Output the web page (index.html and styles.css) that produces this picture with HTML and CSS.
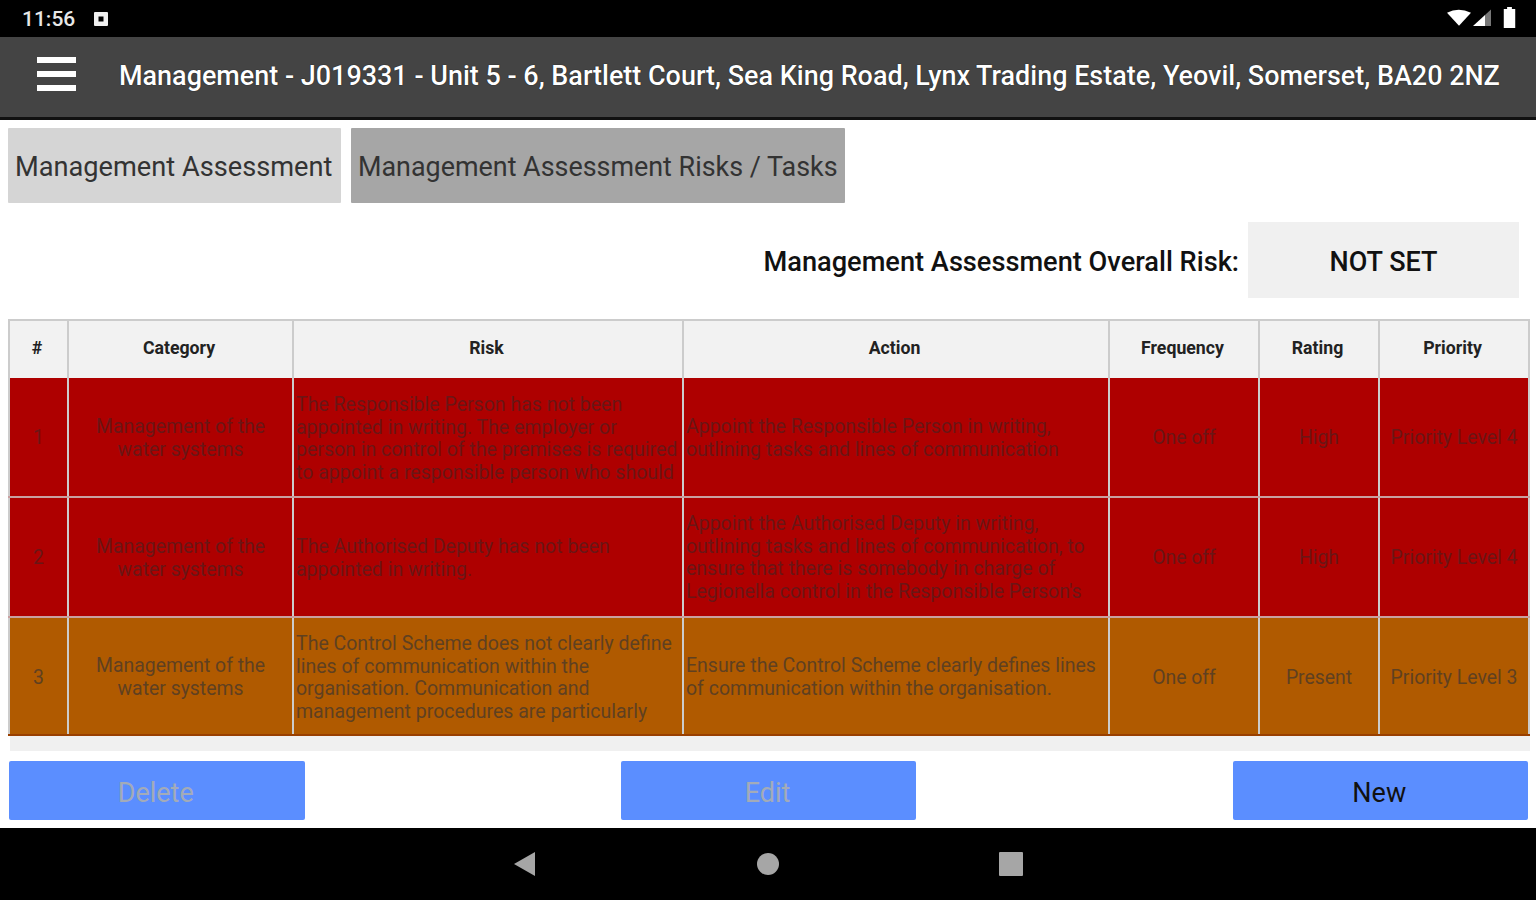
FILE: index.html
```html
<!DOCTYPE html>
<html lang="en">
<head>
<meta charset="utf-8">
<title>Management Assessment Risks</title>
<link rel="stylesheet" href="styles.css">
</head>
<body>
<div class="screen">
  <header class="status">
    <div class="status-left">
      <span class="clock">11:56</span>
      <svg class="notif" viewBox="0 0 16 16" width="16" height="16"><path fill-rule="evenodd" fill="#f0f0f0" d="M2 1h12a1 1 0 0 1 1 1v12a1 1 0 0 1-1 1H2a1 1 0 0 1-1-1V2a1 1 0 0 1 1-1zm3.500 4.500v5h5v-5z"/></svg>
    </div>
    <div class="status-right">
      <svg viewBox="0 0 25 18" width="24" height="18"><path fill="#fff" d="M0 3.500Q12-2.500 25 3.500L12.500 17z"/></svg>
      <svg viewBox="0 0 19 18" width="19" height="18"><path fill="#fff" d="M0 17 12 6v11z"/><path fill="#777" d="M12 6l6-5.500V17h-6z"/></svg>
      <svg viewBox="0 0 12 22" width="13" height="21" class="battery"><path fill="#fff" d="M3.500 0h5v2H12v20H0V2h3.500z"/></svg>
    </div>
  </header>

  <div class="appbar">
    <button class="menu" aria-label="Menu"><span></span><span></span><span></span></button>
    <h1 class="title">Management - J019331 - Unit 5 - 6, Bartlett Court, Sea King Road, Lynx Trading Estate, Yeovil, Somerset, BA20 2NZ</h1>
  </div>

  <main class="content">
    <nav class="tabs">
      <div class="tab">Management Assessment</div>
      <div class="tab tab-active">Management Assessment Risks / Tasks</div>
    </nav>

    <section class="overall">
      <span class="overall-label">Management Assessment Overall Risk:</span>
      <div class="overall-value">NOT SET</div>
    </section>

    <section class="table">
      <div class="row head">
        <div class="cell">#</div><div class="cell">Category</div><div class="cell">Risk</div><div class="cell">Action</div><div class="cell">Frequency</div><div class="cell">Rating</div><div class="cell">Priority</div>
      </div>
      <div class="row red">
        <div class="cell">1</div>
        <div class="cell wrap">Management of the water systems</div>
        <div class="cell left clip">The Responsible Person has not been appointed in writing. The employer or<br>person in control of the premises is required to appoint a responsible person who should</div>
        <div class="cell left">Appoint the Responsible Person in writing, outlining tasks and lines of communication</div>
        <div class="cell">One off</div><div class="cell">High</div><div class="cell">Priority Level 4</div>
      </div>
      <div class="row red">
        <div class="cell">2</div>
        <div class="cell wrap">Management of the water systems</div>
        <div class="cell left">The Authorised Deputy has not been appointed in writing.</div>
        <div class="cell left clip">Appoint the Authorised Deputy in writing, outlining tasks and lines of communication, to ensure that there is somebody in charge of Legionella control in the Responsible Person's</div>
        <div class="cell">One off</div><div class="cell">High</div><div class="cell">Priority Level 4</div>
      </div>
      <div class="row orange">
        <div class="cell">3</div>
        <div class="cell wrap">Management of the water systems</div>
        <div class="cell left clip">The Control Scheme does not clearly define lines of communication within the organisation. Communication and management procedures are particularly</div>
        <div class="cell left">Ensure the Control Scheme clearly defines lines of communication within the organisation.</div>
        <div class="cell">One off</div><div class="cell">Present</div><div class="cell">Priority Level 3</div>
      </div>
    </section>
    <div class="scrollband"></div>

    <div class="actions">
      <button class="btn btn-off">Delete</button>
      <button class="btn btn-off">Edit</button>
      <button class="btn">New</button>
    </div>
  </main>

  <footer class="navbar">
    <svg viewBox="0 0 24 24" width="24" height="24"><path fill="#a6a6a6" d="M22 0v24L1 12z"/></svg>
    <svg viewBox="0 0 24 24" width="24" height="24"><circle fill="#a6a6a6" cx="12" cy="12" r="11"/></svg>
    <svg viewBox="0 0 24 24" width="24" height="24"><rect fill="#a6a6a6" x="0" y="0" width="24" height="24" rx="1"/></svg>
  </footer>
</div>
</body>
</html>
```

FILE: styles.css
```css
* { box-sizing: border-box; }
html, body { margin: 0; padding: 0; }
body { background: #fff; font-family: Roboto, "Liberation Sans", sans-serif; }
.screen { width: 1536px; height: 900px; display: flex; flex-direction: column; overflow: hidden; }

.status { height: 37px; background: #000; display: flex; justify-content: space-between; align-items: center; padding: 0 20px 0 22px; flex: none; }
.status-left { display: flex; align-items: center; gap: 18px; }
.clock { color: #e8e8e8; font-size: 21px; font-weight: 500; }
.notif { display: block; }
.status-right { display: flex; align-items: center; gap: 2px; padding-bottom: 2px; }
.status-right svg { display: block; }
.battery { margin-left: 9px; }

.appbar { height: 83px; background: #444; border-bottom: 3px solid #111; display: flex; align-items: center; flex: none; padding-left: 37px; }
.menu { width: 39px; height: 34px; padding: 0; margin: 0 0 6px; background: none; border: 0; display: flex; flex-direction: column; justify-content: space-between; flex: none; }
.menu span { display: block; height: 6px; background: #fff; }
.title { margin: 0 0 2px 43px; color: #fff; font-size: 26.960px; font-weight: 500; white-space: nowrap; text-shadow: 0 0 1px #000; }

.content { flex: 1; display: flex; flex-direction: column; padding: 8px 6px 0 8px; min-height: 0; }

.tabs { display: flex; gap: 10px; height: 75px; flex: none; }
.tab { background: #d5d5d5; color: #333; font-size: 27.200px; display: flex; align-items: center; padding: 3px 7px 0; width: 333px; white-space: nowrap; border-radius: 1px; }
.tab-active { background: #a6a6a6; width: 494px; font-size: 26.900px; }

.overall { display: flex; justify-content: flex-end; align-items: center; gap: 9px; height: 76px; margin-top: 19px; padding-right: 11px; flex: none; }
.overall-label { font-size: 27.200px; font-weight: 500; color: #111; padding-top: 3px; }
.overall-value { width: 271px; height: 76px; background: #f0f0f0; display: flex; align-items: center; justify-content: center; font-size: 27px; font-weight: 500; color: #111; padding-top: 3px; }

.table { margin-top: 21px; flex: none; border-top: 2px solid #ccc; }
.row { display: grid; grid-template-columns: 59px 225px 390px 426px 150px 120px 152px; height: 120px; }
.row.head { height: 57px; background: #f2f2f2; }
.row.orange { height: 118px; }
.cell { display: flex; align-items: center; justify-content: center; text-align: center; border-left: 2px solid #ccc; font-size: 19.400px; line-height: 22.600px; padding: 2px 2px 0; overflow: hidden; }
.cell:last-child { border-right: 2px solid #ccc; }
.cell.wrap { padding: 4px 24px 0; }
.head .cell { font-weight: 700; font-size: 17.700px; color: #222; padding: 0 3px 2px 0; }
.cell.left { justify-content: flex-start; text-align: left; padding: 4px 0 0 2px; font-size: 19.500px; }
.cell.clip { align-items: flex-start; padding-top: 16px; }
.red { background: #ae0000; color: #6a1616; border-bottom: 2px solid #c9a0a0; }
.red + .red .clip { padding-top: 15px; }
.orange { background: #b05a00; color: #5f4020; border-bottom: 2px solid #993f00; }
.orange .cell { padding-top: 4px; }
.orange .clip { padding-top: 15px; }
.scrollband { height: 15px; background: #f0f0f0; margin-left: 2px; flex: none; }

.actions { display: flex; justify-content: space-between; margin: 10px 2px 0 1px; height: 59px; flex: none; }
.btn { width: 295.500px; height: 59px; background: #5b8eff; border: 0; border-radius: 2px; font: 400 27px Roboto, sans-serif; color: #111; padding: 4px 2px 0 0; }
.btn-off { color: #a3abb8; }

.navbar { height: 72px; background: #000; flex: none; display: flex; align-items: center; justify-content: center; gap: 219px; }
.navbar svg { display: block; }
```
